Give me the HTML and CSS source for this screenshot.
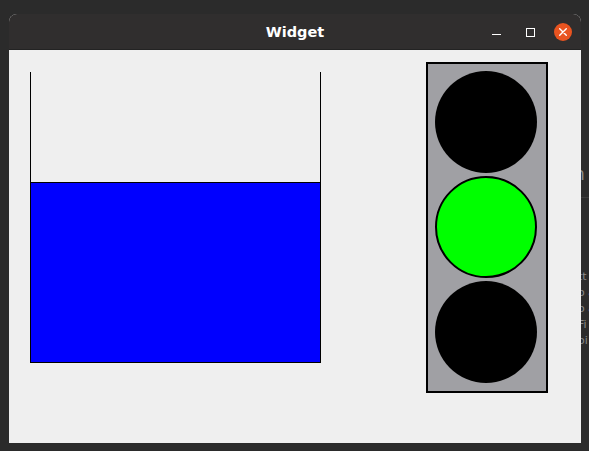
FILE: index.html
```html
<!DOCTYPE html>
<html>
<head>
<meta charset="utf-8">
<title>Widget</title>
<link rel="stylesheet" href="styles.css">
</head>
<body>
<div class="desktop">
  <div class="behind">
    <div class="behind-head">n</div>
    <div class="behind-rule"></div>
    <div class="behind-lines">
      <div>tt</div>
      <div>o <span class="blue">a</span></div>
      <div>o <span class="blue">a</span></div>
      <div>Fi</div>
      <div>oi</div>
    </div>
  </div>
  <div class="window">
    <div class="titlebar">
      <span class="title">Widget</span>
      <div class="controls">
        <span class="ctl min"><span class="min-line"></span></span>
        <span class="ctl max"><span class="max-box"></span></span>
        <span class="ctl close">
          <svg width="18" height="18" viewBox="0 0 18 18"><circle cx="9" cy="9" r="9" fill="#e95420"/><path d="M5.7 5.7 L12.3 12.3 M12.3 5.7 L5.7 12.3" stroke="#fff" stroke-width="1.4" stroke-linecap="round"/></svg>
        </span>
      </div>
    </div>
    <div class="content">
      <div class="tank">
        <div class="water"></div>
      </div>
      <div class="light">
        <div class="lamp off"></div>
        <div class="lamp green"></div>
        <div class="lamp off"></div>
      </div>
    </div>
  </div>
</div>
</body>
</html>
```

FILE: styles.css
```css
* { box-sizing: border-box; }
html, body {
  margin: 0;
  padding: 0;
  width: 589px;
  height: 451px;
  overflow: hidden;
  background: #2b2b2b;
  font-family: "DejaVu Sans", "Liberation Sans", sans-serif;
}
.desktop {
  position: relative;
  width: 589px;
  height: 451px;
}
.behind {
  position: absolute;
  left: 574px;
  top: 164px;
  width: 15px;
  overflow: hidden;
  color: #8a8a8a;
  font-size: 11px;
}
.behind-head {
  font-size: 17px;
  line-height: 20px;
  color: #8c8c8c;
}
.behind-rule {
  margin-top: 13px;
  height: 1px;
  background: #3c3c3c;
}
.behind-lines {
  margin-top: 71px;
  line-height: 16px;
  padding-left: 4px;
  white-space: nowrap;
}
.blue { color: #6f8fb0; }
.window {
  position: absolute;
  left: 9px;
  top: 14px;
  width: 572px;
  height: 429px;
  display: flex;
  flex-direction: column;
  border-radius: 8px 8px 0 0;
  overflow: hidden;
  background: #efefef;
}
.titlebar {
  height: 36px;
  flex: none;
  background: #302e2e;
  border-bottom: 1px solid #232323;
  position: relative;
  display: flex;
  align-items: center;
  justify-content: center;
}
.title {
  color: #ffffff;
  font-weight: bold;
  font-size: 14.5px;
}
.controls {
  position: absolute;
  right: 9px;
  top: 9px;
  display: flex;
  align-items: center;
}
.ctl {
  display: flex;
  align-items: center;
  justify-content: center;
}
.min { width: 10px; height: 18px; margin-right: 24px; }
.min-line { display: block; width: 9px; height: 1px; background: #fff; margin-top: 5px; }
.max { width: 10px; height: 18px; margin-right: 19px; }
.max-box { display: block; width: 9px; height: 9px; border: 1px solid #fff; }
.close { width: 18px; height: 18px; }
.close svg { display: block; }
.content {
  flex: 1;
  display: flex;
  align-items: flex-start;
  padding: 22px 0 0 21px;
}
.tank {
  width: 291px;
  height: 291px;
  border-left: 1px solid #000;
  border-right: 1px solid #000;
  display: flex;
  flex-direction: column;
  justify-content: flex-end;
}
.water {
  height: 181px;
  background: #0000ff;
  border-top: 1px solid #000;
  border-bottom: 1px solid #000;
}
.light {
  margin-left: 105px;
  margin-top: -10px;
  width: 122px;
  height: 331px;
  border: 2px solid #000;
  background: #a0a0a4;
  padding: 7px 0 0 7px;
  display: flex;
  flex-direction: column;
  gap: 3px;
}
.lamp {
  width: 102px;
  height: 102px;
  border-radius: 50%;
  flex: none;
}
.off { background: #000; }
.green {
  background: #00ff00;
  border: 2px solid #000;
}
```
